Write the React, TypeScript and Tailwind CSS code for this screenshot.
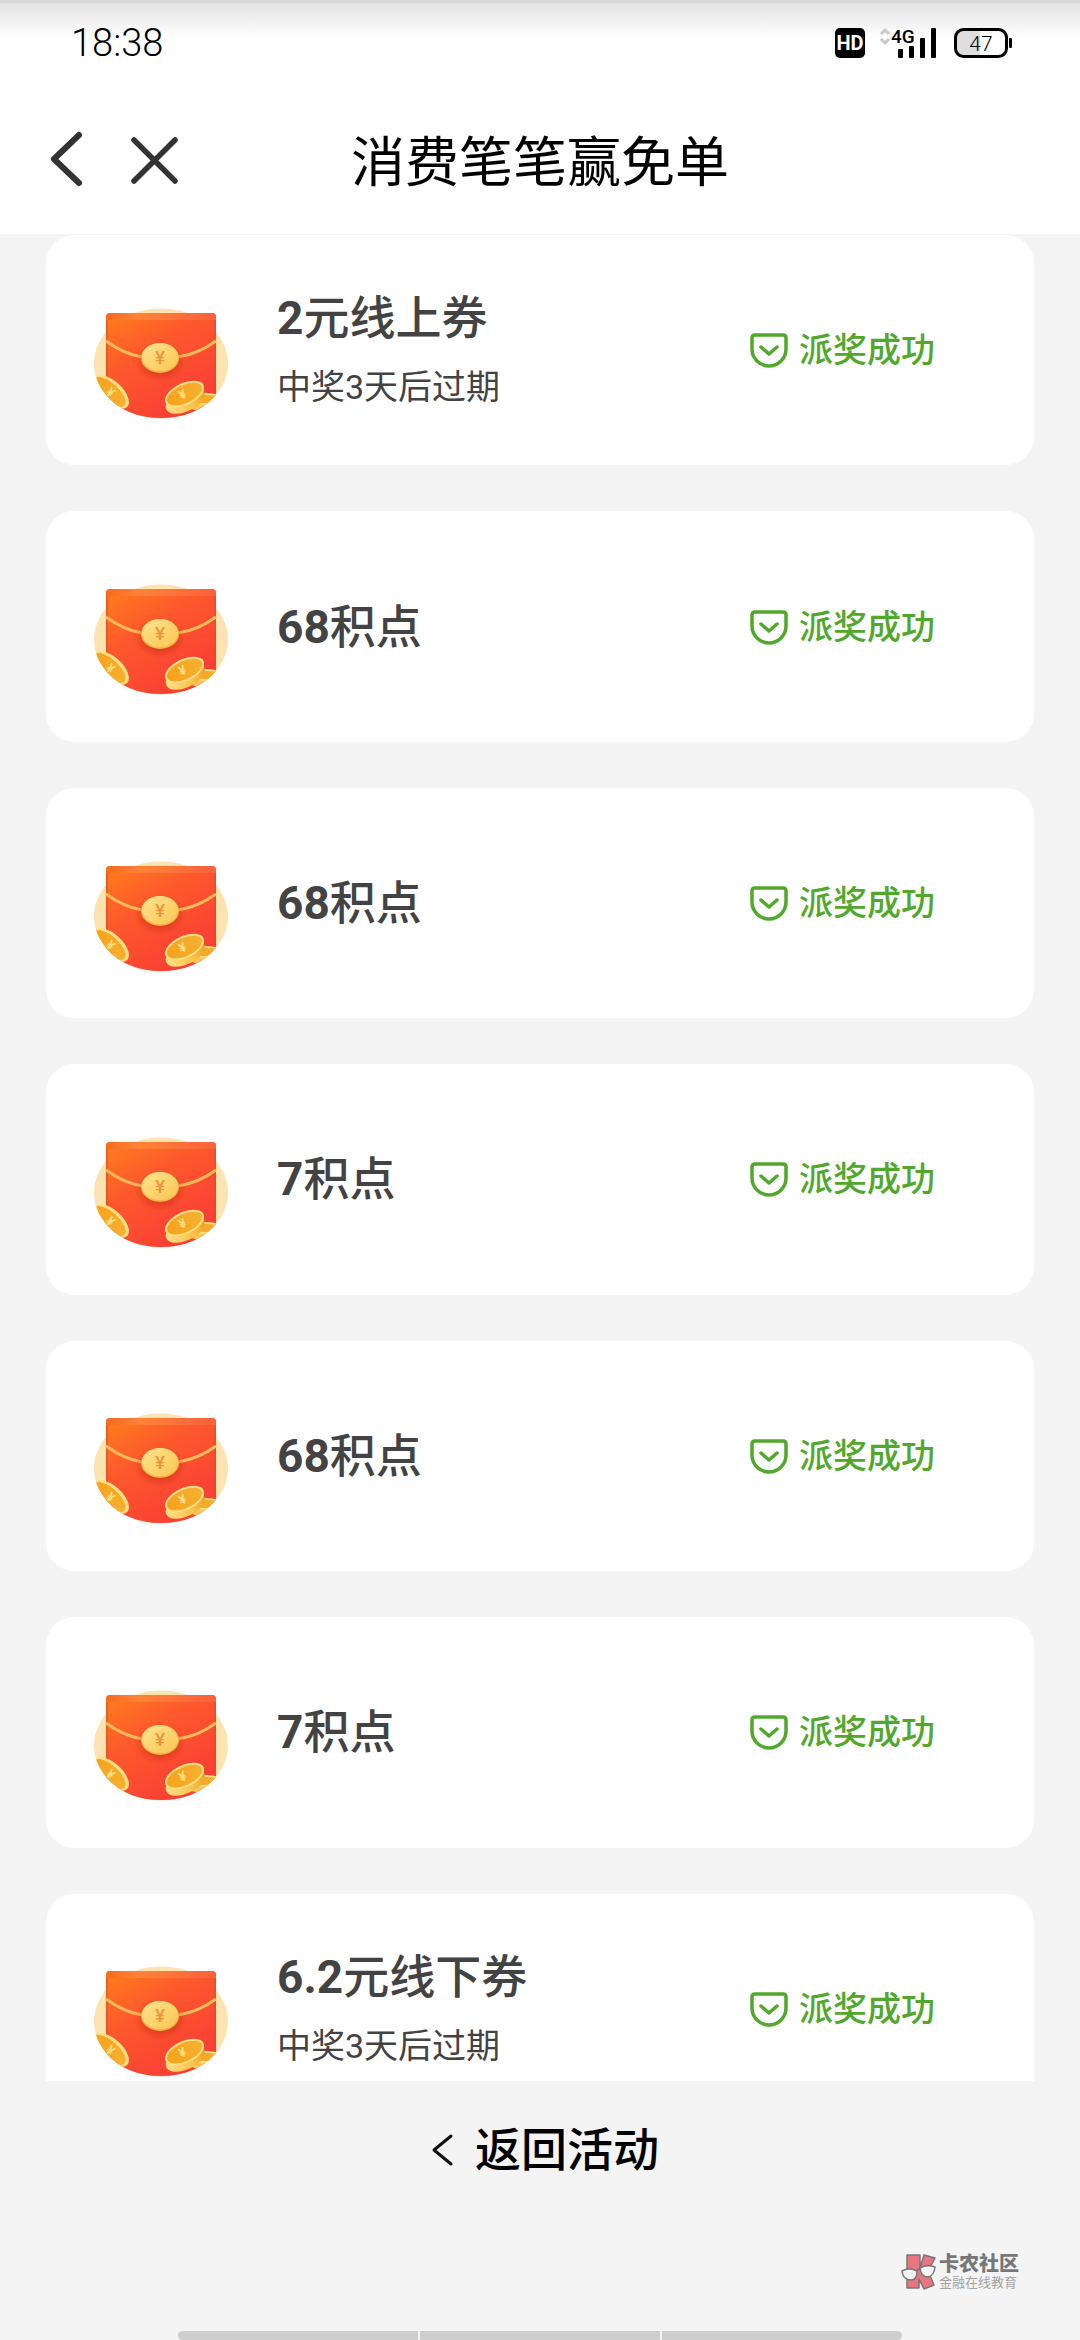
type Prize = {
  id: number;
  amount: string;
  unit: string;
  note?: string;
};

const prizes: Prize[] = [
  { id: 1, amount: '2', unit: '元线上券', note: '中奖3天后过期' },
  { id: 2, amount: '68', unit: '积点' },
  { id: 3, amount: '68', unit: '积点' },
  { id: 4, amount: '7', unit: '积点' },
  { id: 5, amount: '68', unit: '积点' },
  { id: 6, amount: '7', unit: '积点' },
  { id: 7, amount: '6.2', unit: '元线下券', note: '中奖3天后过期' },
];

function SignalIcon() {
  return (
    <svg width="58" height="44" viewBox="0 -6 58 44" aria-label="4G">
      <path d="M2 7l4-4 4 4M2 12l4 4 4-4" fill="none" stroke="#c9c9c9" strokeWidth="3" />
      <text x="12" y="16" fontSize="19" fontWeight="500" className="font-['Roboto',sans-serif]">
        4G
      </text>
      <rect x="19" y="22" width="5" height="9" rx="1" />
      <rect x="30" y="19" width="5" height="12" rx="1" />
      <rect x="41" y="11" width="5" height="20" rx="1" />
      <rect x="52" y="1" width="5" height="30" rx="1" />
    </svg>
  );
}

function BatteryIcon() {
  return (
    <svg width="58" height="30" viewBox="0 0 58 30" aria-label="47%">
      <path d="M10 2H26V28H10a8 8 0 0 1-8-8V10a8 8 0 0 1 8-8z" fill="#dedede" />
      <rect x="1.5" y="1.5" width="51" height="27" rx="8" fill="none" stroke="#000" strokeWidth="3" />
      <rect x="55" y="10" width="3" height="10" rx="1" />
      <text x="27" y="23" textAnchor="middle" fontSize="21" fontWeight="300" className="font-['Roboto',sans-serif]">
        47
      </text>
    </svg>
  );
}

function StatusBar() {
  return (
    <div className="border-t-3 border-[#d6d6d6]">
      <div className="flex h-[79px] items-center justify-between bg-linear-to-b from-[#e2e2e2] to-white to-45% pr-[68px] pl-[71px]">
        <span className="text-[38px] leading-[44px] font-light">18:38</span>
        <div className="flex items-center">
          <span className="flex size-[30px] items-center justify-center rounded-[5px] bg-black text-[20px] leading-[30px] font-bold text-white">
            HD
          </span>
          <span className="ml-[14px] flex">
            <SignalIcon />
          </span>
          <span className="ml-[17px] flex">
            <BatteryIcon />
          </span>
        </div>
      </div>
    </div>
  );
}

function Header() {
  return (
    <header className="bg-white">
      <StatusBar />
      <div className="grid h-[152px] grid-cols-[1fr_auto_1fr] items-center">
        <div className="flex items-center pt-1 pl-[48px]">
          <button type="button" aria-label="返回" className="flex">
            <svg width="38" height="60" viewBox="0 0 38 60" fill="none" stroke="#333" strokeWidth="6" strokeLinecap="round" strokeLinejoin="round">
              <path d="M31 5L6 29l25 24" />
            </svg>
          </button>
          <button type="button" aria-label="关闭" className="ml-[43px] flex">
            <svg width="52" height="52" viewBox="0 0 52 52" fill="none" stroke="#333" strokeWidth="5.5" strokeLinecap="round">
              <path d="M5 6l41 41M46 6L5 47" />
            </svg>
          </button>
        </div>
        <h1 className="pt-3 text-[54px] leading-[64px]">消费笔笔赢免单</h1>
      </div>
    </header>
  );
}

function RedPacket() {
  return (
    <svg width="134" height="111" viewBox="0 0 134 111" className="shrink-0" aria-hidden="true">
      <defs>
        <linearGradient id="packet" x1="0" y1="0" x2="0.7" y2="1">
          <stop offset="0" stopColor="#ff7e1c" />
          <stop offset="0.4" stopColor="#fd5a2c" />
          <stop offset="1" stopColor="#fa3c36" />
        </linearGradient>
        <linearGradient id="flap" x1="0" y1="0" x2="1" y2="0">
          <stop offset="0" stopColor="#f96a1c" />
          <stop offset="0.3" stopColor="#ff8338" />
          <stop offset="1" stopColor="#f9603c" />
        </linearGradient>
        <linearGradient id="seal" x1="0" y1="0" x2="1" y2="1">
          <stop offset="0" stopColor="#ffe38e" />
          <stop offset="1" stopColor="#fbc653" />
        </linearGradient>
        <linearGradient id="coin" x1="0" y1="0" x2="1" y2="0">
          <stop offset="0" stopColor="#f6a31c" />
          <stop offset="1" stopColor="#f6b030" />
        </linearGradient>
        <linearGradient id="edge" x1="0" y1="0" x2="1" y2="0">
          <stop offset="0" stopColor="#ffdf85" />
          <stop offset="0.6" stopColor="#fbc24a" />
          <stop offset="1" stopColor="#ee9f22" />
        </linearGradient>
        <radialGradient id="shade">
          <stop offset="0.5" stopColor="#c22a10" stopOpacity="0.5" />
          <stop offset="1" stopColor="#c22a10" stopOpacity="0" />
        </radialGradient>
        <clipPath id="disc">
          <ellipse cx="67" cy="55.5" rx="67" ry="55" />
        </clipPath>
      </defs>
      <ellipse cx="67" cy="55.5" rx="67" ry="55" fill="#fde3b0" />
      {/* the packet's upper corners stick out of the disc */}
      <path d="M12 9q0-4 4-4h102q4 0 4 4v78q-20 23-55 23T12 87z" fill="url(#packet)" />
      <path d="M12 12V9q0-4 4-4h102q4 0 4 4v3z" fill="url(#flap)" />
      <path d="M13 12v70M121 12v70" stroke="#e04a22" strokeWidth="2" opacity="0.5" />
      <path d="M12 33q18 13 36 16M84 49q20-3 38-16" fill="none" stroke="#fdb95a" strokeWidth="3" />
      <ellipse cx="66" cy="54" rx="26" ry="20" fill="url(#shade)" />
      <ellipse cx="66" cy="50" rx="19" ry="15" fill="#f2b548" />
      <ellipse cx="66" cy="49" rx="18" ry="14" fill="url(#seal)" />
      <text x="66" y="56" textAnchor="middle" fontSize="19" fontWeight="500" fill="#e8973a" className="font-['Roboto',sans-serif]">
        ¥
      </text>
      <g clipPath="url(#disc)" fontSize="13" fontWeight="700" textAnchor="middle" className="font-['Roboto',sans-serif]">
        <g transform="rotate(42 17 84)">
          <ellipse cx="17" cy="84" rx="22" ry="11" fill="#ffdf85" />
          <ellipse cx="16" cy="85" rx="20" ry="9" fill="url(#coin)" />
          <text x="17" y="89" fill="#ffdf85">
            ¥
          </text>
        </g>
        <ellipse cx="110" cy="96" rx="18" ry="7" fill="#f9c458" />
        <ellipse cx="112" cy="91" rx="18" ry="6" fill="#ffdf85" />
        <ellipse cx="112" cy="91" rx="15" ry="4" fill="url(#coin)" />
        <g transform="rotate(-25 91 87)">
          <ellipse cx="89" cy="92" rx="21" ry="11" fill="url(#edge)" />
          <ellipse cx="91" cy="86" rx="21" ry="11" fill="#ffdf85" />
          <ellipse cx="91" cy="86" rx="19" ry="9" fill="url(#coin)" />
          <text x="89" y="90" fill="#ffdf85">
            ¥
          </text>
        </g>
      </g>
    </svg>
  );
}

function AwardStatus() {
  return (
    <div className="ml-auto flex items-center gap-[10px] text-[#51a82c]">
      <svg width="40" height="38" viewBox="0 0 40 38" fill="none" stroke="currentColor" strokeWidth="3.5" strokeLinecap="round" strokeLinejoin="round" aria-hidden="true">
        <path d="M6 4h28q3 0 3 3v11a17 17 0 0 1-34 0V7q0-3 3-3z" />
        <path d="M12 16l8 7 8-7" />
      </svg>
      <span className="text-[34px] leading-[44px] font-medium">派奖成功</span>
    </div>
  );
}

function PrizeCard({ prize }: { prize: Prize }) {
  return (
    <li className="flex items-center rounded-[28px] bg-white pr-[99px] pl-[48px]">
      <div className="pt-[26px]">
        <RedPacket />
      </div>
      <div className="ml-[49px] text-[#434343]">
        <p className="text-[46px] leading-[60px] font-medium">
          <span className="font-bold">{prize.amount}</span>
          {prize.unit}
        </p>
        {prize.note && <p className="mt-[14px] text-[34px] leading-[50px]">{prize.note}</p>}
      </div>
      <AwardStatus />
    </li>
  );
}

function Watermark() {
  return (
    <div className="mr-[61px] flex items-center gap-[2px] self-end">
      <svg width="36" height="38" viewBox="0 0 36 38" fill="#e87680" stroke="#777" strokeWidth="1.5" strokeLinejoin="round" aria-hidden="true">
        <path d="M6 2h13v13l4-13 11 3-7 13 6 14-10 4-5-10v9H6z" />
        <path d="M1 18q7-4 15 0 0 9-6 9-8 0-9-9zM19 15q7-4 15-1-1 9-7 10-7 0-8-9z" fill="#f6f6f6" />
        <path d="M16 18q1-2 3-2" fill="none" />
      </svg>
      <div>
        <p className="text-[20px] leading-[22px] font-black text-[#777]">卡农社区</p>
        <p className="text-[13px] leading-[16px] text-[#a3a3a3]">金融在线教育</p>
      </div>
    </div>
  );
}

export default function App() {
  return (
    <div className="flex h-screen flex-col bg-[#f4f4f4] font-['Roboto','Noto_Sans_CJK_SC',sans-serif] text-black">
      <Header />
      <main className="min-h-0 flex-1 overflow-hidden px-[46px] pt-px">
        <ul className="grid h-[1889px] grid-rows-7 gap-[46px]">
          {prizes.map((prize) => (
            <PrizeCard key={prize.id} prize={prize} />
          ))}
        </ul>
      </main>
      <footer className="flex h-[259px] flex-col items-center">
        <button type="button" className="mt-[39px] flex items-center gap-[14px] text-[46px] leading-[60px] font-medium">
          <svg width="40" height="40" viewBox="0 0 40 40" fill="none" stroke="#111" strokeWidth="3" strokeLinecap="round" strokeLinejoin="round" aria-hidden="true">
            <path d="M30 6L13 20l17 14" />
          </svg>
          返回活动
        </button>
        <div className="mt-[73px] flex w-full flex-col">
          <Watermark />
        </div>
        {/* gesture bar */}
        <div className="mt-auto grid h-[9px] w-[67%] grid-cols-3 gap-[2px] overflow-hidden rounded-[5px]">
          <span className="bg-[#cecece]" />
          <span className="bg-[#cecece]" />
          <span className="bg-[#cecece]" />
        </div>
      </footer>
    </div>
  );
}
